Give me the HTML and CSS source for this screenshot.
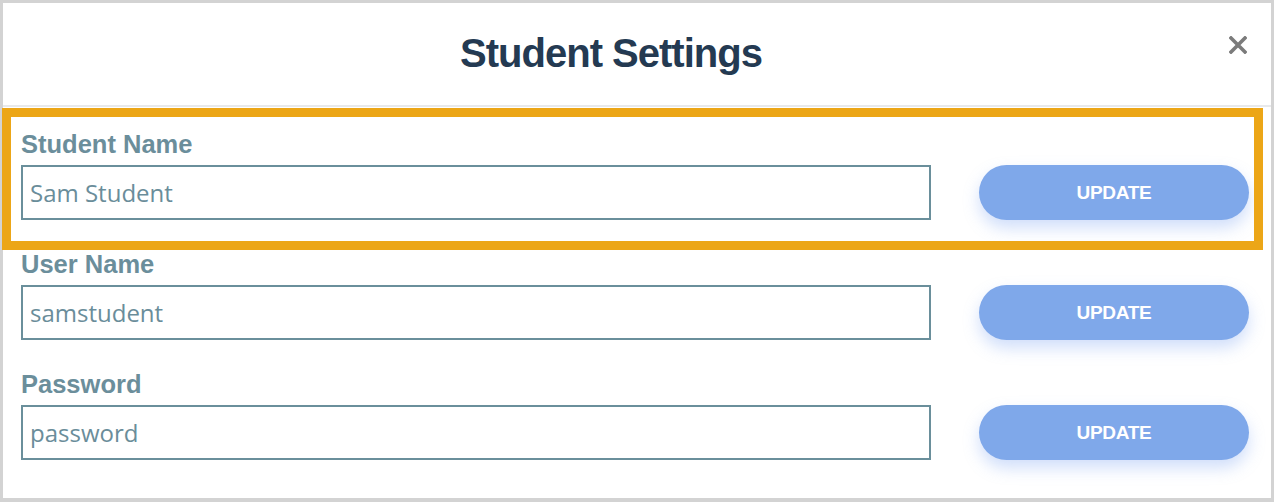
FILE: index.html
```html
<!DOCTYPE html>
<html>
<head>
<meta charset="utf-8">
<link rel="stylesheet" href="styles.css">
</head>
<body>
<div class="panel">
  <header class="header">
    <h1 class="title">Student Settings</h1>
    <button class="close" aria-label="Close">
      <svg width="18" height="18" viewBox="0 0 18 18"><path d="M2 2L16 16M16 2L2 16" stroke="#7b7b7b" stroke-width="3.6" stroke-linecap="square"/></svg>
    </button>
  </header>
  <div class="content">
    <div class="row">
      <div class="field">
        <label class="label">Student Name</label>
        <input class="input" type="text" value="Sam Student">
      </div>
      <button class="update">UPDATE</button>
    </div>
    <div class="row">
      <div class="field">
        <label class="label">User Name</label>
        <input class="input" type="text" value="samstudent">
      </div>
      <button class="update">UPDATE</button>
    </div>
    <div class="row">
      <div class="field">
        <label class="label">Password</label>
        <input class="input" type="text" value="password">
      </div>
      <button class="update">UPDATE</button>
    </div>
  </div>
  <div class="highlight"></div>
</div>
</body>
</html>
```

FILE: styles.css
```css
html, body {
  margin: 0;
  padding: 0;
}
body {
  background: #d3d3d3;
  padding: 3px 3px 4px 3px;
  height: 502px;
  box-sizing: border-box;
  font-family: "Liberation Sans", Arial, sans-serif;
}
.panel {
  position: relative;
  background: #fff;
  height: 495px;
}
.header {
  position: relative;
  height: 104px;
  border-bottom: 2px solid #e8e9eb;
  display: flex;
  align-items: center;
  justify-content: center;
  padding-right: 52px;
  box-sizing: border-box;
}
.title {
  margin: 0;
  font-size: 40px;
  letter-spacing: -1px;
  font-weight: 700;
  color: #243a52;
  line-height: 1;
  padding-bottom: 2px;
}
.close {
  position: absolute;
  right: 24px;
  top: 33px;
  width: 18px;
  height: 18px;
  padding: 0;
  border: 0;
  background: none;
  display: flex;
}
.content {
  padding: 23px 22px 0 18px;
  display: flex;
  flex-direction: column;
  gap: 30px;
}
.row {
  display: flex;
  align-items: flex-end;
  gap: 48px;
}
.field {
  width: 910px;
  display: flex;
  flex-direction: column;
  gap: 7px;
}
.label {
  font-size: 25.5px;
  font-weight: 700;
  color: #6b8e9b;
  line-height: 28px;
}
.input {
  box-sizing: border-box;
  width: 910px;
  height: 55px;
  margin: 0;
  border: 2px solid #6a8f9b;
  border-radius: 0;
  padding: 0 7px;
  font-family: "Open Sans", sans-serif;
  font-size: 24px;
  color: #6a8d9a;
  background: #fff;
  outline: none;
}
.update {
  width: 270px;
  height: 55px;
  border: 0;
  border-radius: 28px;
  background: #7fa8ea;
  color: #fff;
  font-family: "Liberation Sans", Arial, sans-serif;
  font-weight: 700;
  font-size: 19px;
  letter-spacing: -0.3px;
  box-shadow: 0 8px 16px rgba(120, 160, 240, 0.35);
  padding: 0;
}
.highlight {
  position: absolute;
  left: -1px;
  top: 105px;
  width: 1261px;
  height: 142px;
  box-sizing: border-box;
  border: 9px solid #eca617;
  pointer-events: none;
}
```
